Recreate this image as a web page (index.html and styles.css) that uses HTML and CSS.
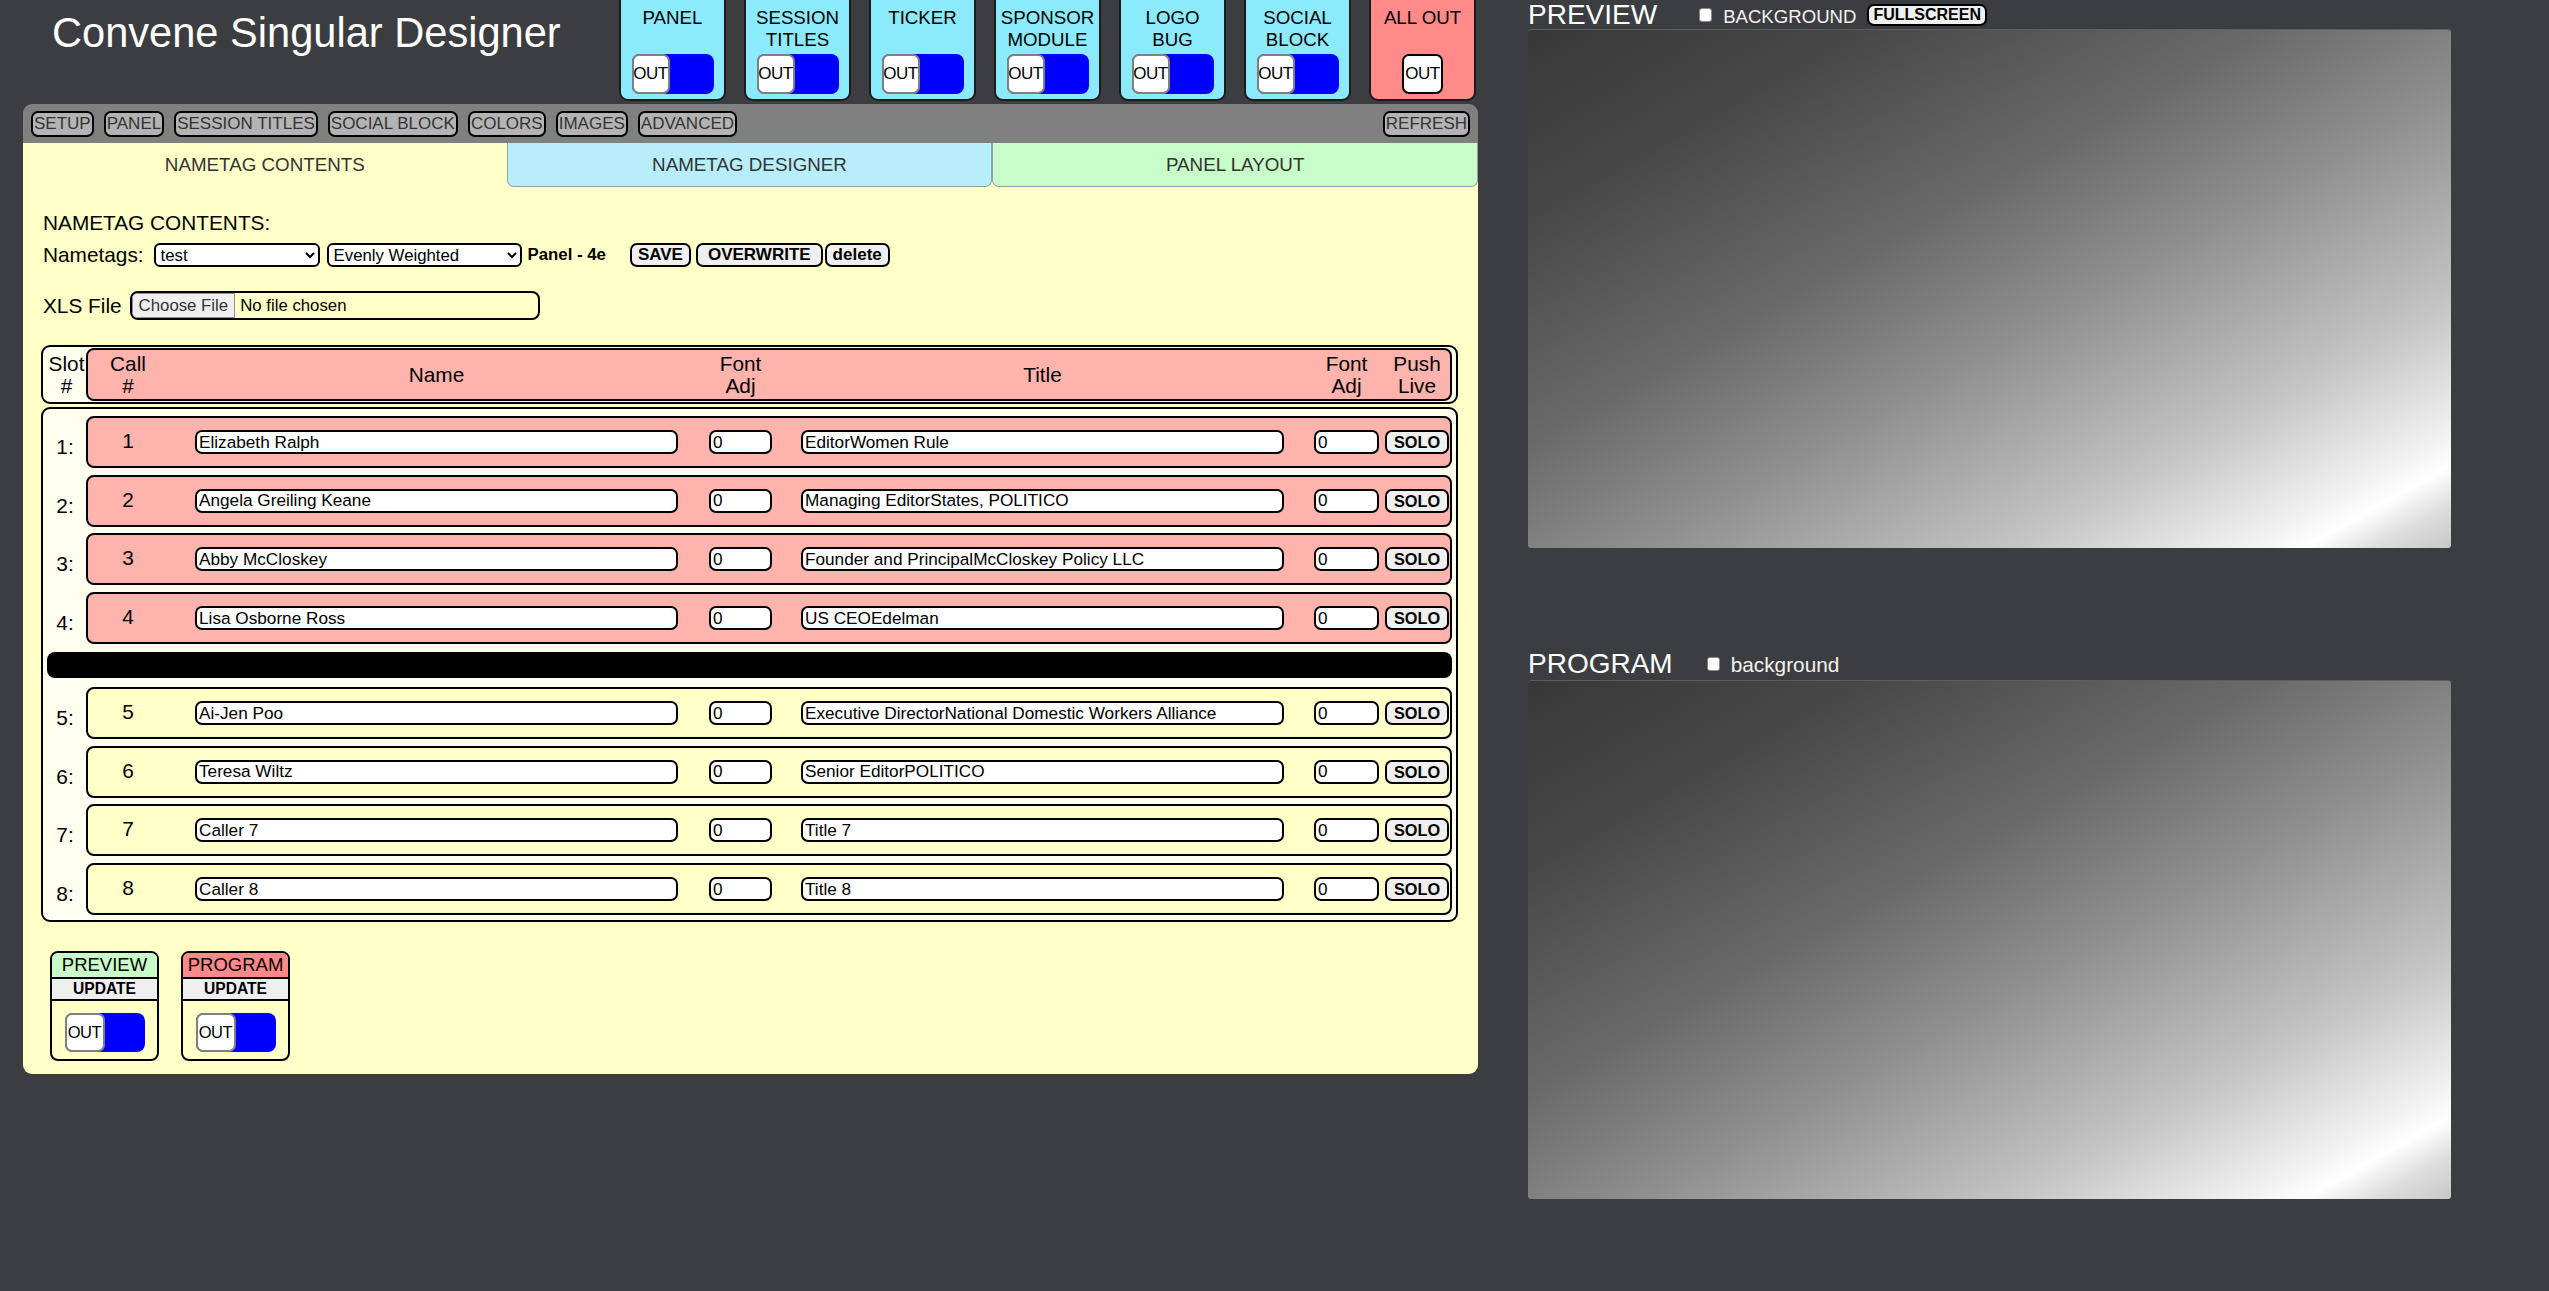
FILE: index.html
```html
<!DOCTYPE html>
<html lang="en">
<head>
<meta charset="utf-8">
<title>Convene Singular Designer</title>
<link rel="stylesheet" href="styles.css">
</head>
<body>
<div class="app">
  <div class="left">
    <header class="top">
      <h1 class="title">Convene Singular Designer</h1>
      <div class="tiles">
        <div class="tile"><div class="tile-label">PANEL</div><div class="toggle"><span class="knob">OUT</span></div></div>
        <div class="tile"><div class="tile-label">SESSION<br>TITLES</div><div class="toggle"><span class="knob">OUT</span></div></div>
        <div class="tile"><div class="tile-label">TICKER</div><div class="toggle"><span class="knob">OUT</span></div></div>
        <div class="tile"><div class="tile-label">SPONSOR<br>MODULE</div><div class="toggle"><span class="knob">OUT</span></div></div>
        <div class="tile"><div class="tile-label">LOGO<br>BUG</div><div class="toggle"><span class="knob">OUT</span></div></div>
        <div class="tile"><div class="tile-label">SOCIAL<br>BLOCK</div><div class="toggle"><span class="knob">OUT</span></div></div>
        <div class="tile tile-red"><div class="tile-label">ALL OUT</div><button class="allout">OUT</button></div>
      </div>
    </header>

    <nav class="toolbar">
      <div class="tb-group">
        <button class="tb-btn">SETUP</button>
        <button class="tb-btn">PANEL</button>
        <button class="tb-btn">SESSION TITLES</button>
        <button class="tb-btn">SOCIAL BLOCK</button>
        <button class="tb-btn">COLORS</button>
        <button class="tb-btn">IMAGES</button>
        <button class="tb-btn">ADVANCED</button>
      </div>
      <button class="tb-btn">REFRESH</button>
    </nav>

    <div class="tabs">
      <div class="tab tab-active">NAMETAG CONTENTS</div>
      <div class="tab tab-blue">NAMETAG DESIGNER</div>
      <div class="tab tab-green">PANEL LAYOUT</div>
    </div>

    <main class="panel">
      <div class="heading">NAMETAG CONTENTS:</div>
      <div class="ctrl-row">
        <span>Nametags:</span>
        <select class="sel sel1"><option>test</option></select>
        <select class="sel sel2"><option>Evenly Weighted</option></select>
        <span class="panel-name">Panel - 4e</span>
        <button class="btn btn-save">SAVE</button>
        <button class="btn btn-ow">OVERWRITE</button>
        <button class="btn btn-del">delete</button>
      </div>
      <div class="xls-row">
        <span>XLS File</span>
        <div class="file"><span class="file-btn">Choose File</span><span class="file-name">No file chosen</span></div>
      </div>

      <div class="thead">
        <div class="slot-h"><span>Slot</span><span>#</span></div>
        <div class="pink grid ghead">
          <div class="h h-call">Call<br>#</div>
          <div class="h h-name">Name</div>
          <div class="h h-fa">Font<br>Adj</div>
          <div class="h h-title">Title</div>
          <div class="h h-fa2">Font<br>Adj</div>
          <div class="h h-solo">Push<br>Live</div>
        </div>
      </div>

      <div class="tbody">
        <div class="row"><div class="slot">1:</div><div class="pink grid">
          <div class="call">1</div><input class="inp inp-name" value="Elizabeth Ralph"><input class="inp inp-fa" value="0"><input class="inp inp-title" value="EditorWomen Rule"><input class="inp inp-fa2" value="0"><button class="solo">SOLO</button>
        </div></div>
        <div class="row"><div class="slot">2:</div><div class="pink grid">
          <div class="call">2</div><input class="inp inp-name" value="Angela Greiling Keane"><input class="inp inp-fa" value="0"><input class="inp inp-title" value="Managing EditorStates, POLITICO"><input class="inp inp-fa2" value="0"><button class="solo">SOLO</button>
        </div></div>
        <div class="row"><div class="slot">3:</div><div class="pink grid">
          <div class="call">3</div><input class="inp inp-name" value="Abby McCloskey"><input class="inp inp-fa" value="0"><input class="inp inp-title" value="Founder and PrincipalMcCloskey Policy LLC"><input class="inp inp-fa2" value="0"><button class="solo">SOLO</button>
        </div></div>
        <div class="row"><div class="slot">4:</div><div class="pink grid">
          <div class="call">4</div><input class="inp inp-name" value="Lisa Osborne Ross"><input class="inp inp-fa" value="0"><input class="inp inp-title" value="US CEOEdelman"><input class="inp inp-fa2" value="0"><button class="solo">SOLO</button>
        </div></div>
        <div class="sep"></div>
        <div class="row row-off"><div class="slot">5:</div><div class="pink grid">
          <div class="call">5</div><input class="inp inp-name" value="Ai-Jen Poo"><input class="inp inp-fa" value="0"><input class="inp inp-title" value="Executive DirectorNational Domestic Workers Alliance"><input class="inp inp-fa2" value="0"><button class="solo">SOLO</button>
        </div></div>
        <div class="row row-off"><div class="slot">6:</div><div class="pink grid">
          <div class="call">6</div><input class="inp inp-name" value="Teresa Wiltz"><input class="inp inp-fa" value="0"><input class="inp inp-title" value="Senior EditorPOLITICO"><input class="inp inp-fa2" value="0"><button class="solo">SOLO</button>
        </div></div>
        <div class="row row-off"><div class="slot">7:</div><div class="pink grid">
          <div class="call">7</div><input class="inp inp-name" value="Caller 7"><input class="inp inp-fa" value="0"><input class="inp inp-title" value="Title 7"><input class="inp inp-fa2" value="0"><button class="solo">SOLO</button>
        </div></div>
        <div class="row row-off"><div class="slot">8:</div><div class="pink grid">
          <div class="call">8</div><input class="inp inp-name" value="Caller 8"><input class="inp inp-fa" value="0"><input class="inp inp-title" value="Title 8"><input class="inp inp-fa2" value="0"><button class="solo">SOLO</button>
        </div></div>
      </div>

      <div class="outs">
        <div class="obox">
          <div class="ohead ohead-green">PREVIEW</div>
          <div class="oupd">UPDATE</div>
          <div class="obody"><div class="toggle toggle-sm"><span class="knob">OUT</span></div></div>
        </div>
        <div class="obox">
          <div class="ohead ohead-red">PROGRAM</div>
          <div class="oupd">UPDATE</div>
          <div class="obody"><div class="toggle toggle-sm"><span class="knob">OUT</span></div></div>
        </div>
      </div>
    </main>
  </div>

  <aside class="right">
    <div class="mon-head">
      <span class="mon-title">PREVIEW</span>
      <input type="checkbox" class="chk">
      <span class="mon-opt mon-opt-caps">BACKGROUND</span>
      <button class="fs-btn">FULLSCREEN</button>
    </div>
    <div class="screen"></div>
    <div class="mon-head mon-head-prog">
      <span class="mon-title">PROGRAM</span>
      <input type="checkbox" class="chk chk-prog">
      <span class="mon-opt mon-opt-low">background</span>
    </div>
    <div class="screen"></div>
  </aside>
</div>
</body>
</html>
```

FILE: styles.css
```css
* { box-sizing: border-box; }
html, body { margin: 0; padding: 0; }
body {
  background: #3c3d40;
  font-family: "Liberation Sans", Arial, sans-serif;
  color: #000;
  width: 2549px;
  height: 1291px;
  overflow: hidden;
}
button, input, select {
  font-family: "Liberation Sans", Arial, sans-serif;
  color: #000;
  margin: 0;
}

.app { display: flex; align-items: flex-start; padding-left: 23px; }
.left { flex: 0 0 1455px; width: 1455px; }
.right { flex: 0 0 923px; margin-left: 50px; }

/* header */
.top { display: flex; height: 104px; }
.title {
  flex: 0 0 596px;
  margin: 0;
  padding: 9px 0 0 29px;
  font-size: 41.6px;
  line-height: 48px;
  font-weight: normal;
  color: #fff;
}
.tiles { display: flex; gap: 18px; align-items: flex-start; }
.tile {
  width: 107px;
  height: 101px;
  background: #8ceafd;
  border: 2px solid #1c1c1c;
  border-top: none;
  border-radius: 0 0 9px 9px;
  display: flex;
  flex-direction: column;
  align-items: center;
  padding-top: 7px;
}
.tile-red { background: #ff8a8a; }
.tile-label {
  height: 47px;
  font-size: 18.7px;
  line-height: 22px;
  text-align: center;
}
.toggle {
  width: 82px;
  height: 40px;
  background: #0000ff;
  border-radius: 8px;
  display: flex;
}
.knob {
  width: 38px;
  height: 100%;
  background: #fff;
  border: 2px solid #808080;
  border-radius: 7px;
  display: flex;
  align-items: center;
  justify-content: center;
  font-size: 17px;
  letter-spacing: -0.4px;
}
.allout {
  width: 41px;
  height: 40px;
  background: #fff;
  border: 2px solid #000;
  border-radius: 7px;
  font-size: 17px;
  padding: 0;
  letter-spacing: -0.4px;
}

/* toolbar */
.toolbar {
  height: 39px;
  background: #808080;
  border-radius: 9px 9px 0 0;
  display: flex;
  align-items: center;
  justify-content: space-between;
  padding: 0 8px;
}
.tb-group { display: flex; gap: 10px; }
.tb-btn {
  height: 26px;
  padding: 0 1px;
  border: 2px solid #000;
  border-radius: 7px;
  background: #b3b3b3;
  color: #333;
  font-size: 17px;
  line-height: 20px;
}

/* tabs */
.tabs { display: flex; height: 44px; background: #ffffc8; }
.tab {
  flex: 1;
  display: flex;
  align-items: center;
  justify-content: center;
  font-size: 18.8px;
  color: #333;
}
.tab-blue, .tab-green {
  border: 1px solid #8da3a6;
  border-top: none;
  border-radius: 0 0 7px 7px;
}
.tab-blue { background: #b8eefb; }
.tab-green { background: #c8fcc8; }

/* panel */
.panel {
  background: #ffffc8;
  border-radius: 0 0 9px 9px;
  padding: 24px 20px 13px 18px;
}
.heading { margin-left: 2px; font-size: 20.8px; line-height: 24px; }
.ctrl-row {
  display: flex;
  align-items: center;
  height: 24px;
  margin-top: 8px;
  margin-left: 2px;
  font-size: 20.8px;
}
.sel {
  height: 24px;
  border: 2px solid #000;
  border-radius: 6px;
  background: #fff;
  font-size: 16.8px;
  padding: 0 1px;
}
.sel1 { width: 166px; margin-left: 10px; }
.sel2 { width: 195px; margin-left: 7px; }
.panel-name { margin-left: 6px; font-size: 16.8px; font-weight: bold; }
.btn {
  height: 24px;
  border: 2px solid #000;
  border-radius: 7px;
  background: #efefef;
  font-size: 17px;
  font-weight: bold;
  padding: 0 6px;
  line-height: 18px;
}
.btn-save { margin-left: 24px; }
.btn-ow { margin-left: 5px; padding: 0 10px; }
.btn-del { margin-left: 2px; }

.xls-row {
  display: flex;
  align-items: center;
  margin-top: 24px;
  margin-left: 2px;
  font-size: 20.8px;
}
.file {
  margin-left: 8px;
  width: 410px;
  height: 29px;
  border: 2px solid #000;
  border-radius: 8px;
  background: #ffffc8;
  display: flex;
  align-items: center;
  font-size: 16.8px;
  overflow: hidden;
}
.file-btn {
  height: 25px;
  padding: 0 6px;
  background: #efefef;
  border: 1px solid #8f8f8f;
  border-radius: 4px 0 0 4px;
  display: flex;
  align-items: center;
  color: #333;
}
.file-name { margin-left: 5px; }

/* table */
.thead {
  margin-top: 25px;
  display: flex;
  background: #fffff0;
  border: 2px solid #000;
  border-radius: 9px;
  padding: 1px 4px 1px 0;
}
.slot-h {
  flex: 0 0 43px;
  display: flex;
  flex-direction: column;
  justify-content: center;
  align-items: center;
  padding-left: 4px;
  font-size: 20.8px;
  line-height: 21.5px;
}
.pink {
  background: #ffb3ad;
  border: 2px solid #000;
  border-radius: 8px;
}
.grid {
  flex: 1;
  display: grid;
  grid-template-columns: 80px 510px 94px 512px 95px 70px;
  align-items: center;
  padding-right: 1px;
}
.ghead { height: 53px; }
.h {
  justify-self: end;
  text-align: center;
  font-size: 20.8px;
  line-height: 21.5px;
}
.h-call { justify-self: stretch; }
.h-name, .h-title { width: 483px; }
.h-fa { width: 63px; }
.h-fa2 { width: 65px; }
.h-solo { width: 64px; }

.tbody {
  margin-top: 3px;
  background: #fffff0;
  border: 2px solid #000;
  border-radius: 9px;
  padding: 7px 4px 5px 0;
  display: flex;
  flex-direction: column;
  gap: 6.7px;
}
.row { display: flex; height: 52px; }
.row-off .pink { background: #ffffc8; }
.slot {
  flex: 0 0 43px;
  display: flex;
  align-items: center;
  justify-content: center;
  padding: 10px 0 0 1px;
  font-size: 20.8px;
}
.call { text-align: center; font-size: 20.8px; padding-bottom: 2px; }
.sep {
  height: 26px;
  background: #000;
  border-radius: 8px;
  margin: 1.3px 0 2.3px 4px;
}
.inp {
  justify-self: end;
  height: 24px;
  border: 2px solid #000;
  border-radius: 7px;
  background: #fff;
  font-size: 17.2px;
  padding: 0 2px;
  outline: none;
}
.inp-name, .inp-title { width: 483px; }
.inp-fa { width: 63px; }
.inp-fa2 { width: 65px; }
.solo {
  justify-self: end;
  width: 64px;
  height: 24px;
  border: 2px solid #000;
  border-radius: 7px;
  background: #efefef;
  font-size: 16.3px;
  font-weight: bold;
  padding: 0;
  line-height: 18px;
}

/* output boxes */
.outs { display: flex; gap: 22px; margin-top: 29px; margin-left: 9px; }
.obox {
  width: 109px;
  height: 110px;
  border: 2px solid #000;
  border-radius: 8px;
  overflow: hidden;
  display: flex;
  flex-direction: column;
}
.ohead {
  height: 24px;
  display: flex;
  align-items: center;
  justify-content: center;
  font-size: 18.5px;
}
.ohead-green { background: #c8fcc8; }
.ohead-red { background: #ff8888; }
.oupd {
  height: 24px;
  background: #efefef;
  border-top: 2px solid #000;
  border-bottom: 2px solid #000;
  display: flex;
  align-items: center;
  justify-content: center;
  font-size: 15.6px;
  font-weight: bold;
}
.obody { flex: 1; display: flex; justify-content: center; padding-top: 12px; }
.toggle-sm { width: 80px; height: 39px; }
.toggle-sm .knob { width: 40px; font-size: 16.5px; }

/* right column */
.mon-head { display: flex; align-items: center; height: 29px; color: #fff; }
.mon-title { font-size: 28px; line-height: 29px; }
.chk {
  appearance: none;
  -webkit-appearance: none;
  width: 13px;
  height: 14px;
  margin: 0 0 0 42px;
  background: #fff;
  border: 1px solid #8a8a8a;
  border-radius: 3px;
}
.chk-prog { margin-left: 34px; }
.mon-opt { margin-left: 11px; color: #f2f2f2; }
.mon-opt-caps { font-size: 18.6px; margin-top: 4px; }
.mon-opt-low { font-size: 20.8px; margin-top: 2px; }
.fs-btn {
  margin-left: 11px;
  height: 22px;
  padding: 0 4px;
  border: 2px solid #000;
  border-radius: 7px;
  background: #efefef;
  font-size: 16px;
  font-weight: bold;
  line-height: 16px;
}
.mon-head-prog { margin-top: 100px; height: 32px; }
.mon-head-prog .mon-title { line-height: 32px; }
.screen {
  width: 923px;
  height: 519px;
  border-radius: 3px;
  border-top: 1px solid #5e5e5e;
  background: linear-gradient(to bottom right, #383838 0%, #474747 18%, #6a6a6a 40%, #8f8f8f 56%, #c4c4c4 76%, #f6f6f6 90%, #ffffff 92%, #dcdcdc 96%, #c8c8c8 100%);
}
```
